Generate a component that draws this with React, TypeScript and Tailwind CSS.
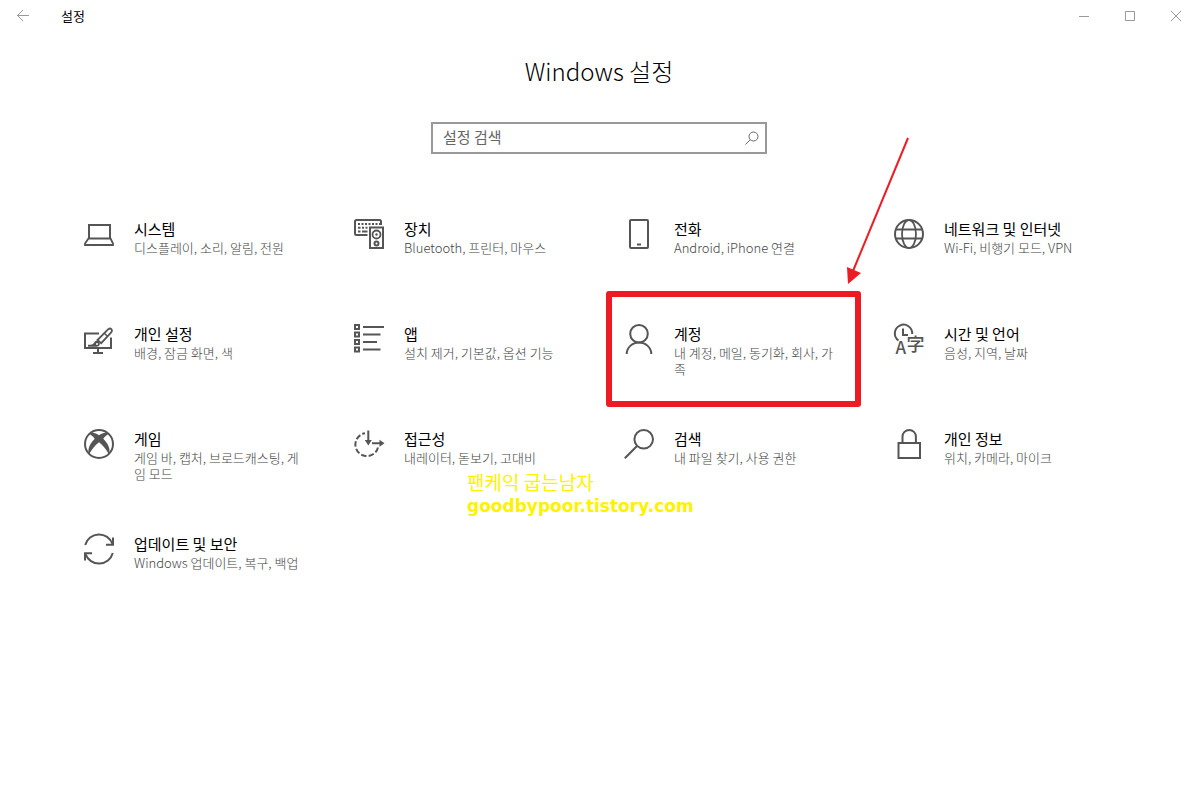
import type { ReactNode } from "react";

type Category = {
  title: string;
  description: string;
  icon: ReactNode;
  overlay?: ReactNode;
};

const Icon = ({ children }: { children: ReactNode }) => (
  <svg
    className="size-[30px] shrink-0 overflow-visible text-[#555]"
    viewBox="0 0 30 30"
    fill="none"
    stroke="currentColor"
    strokeWidth="2"
    aria-hidden="true"
  >
    {children}
  </svg>
);

const SystemIcon = () => (
  <Icon>
    <path d="M5 19V6h21v13" />
    <path d="M4.500 19.500h22l2.500 5V26H1v-1.500z" strokeWidth="1.800" />
  </Icon>
);

const DevicesIcon = () => (
  <Icon>
    <path d="M13.500 16H2.500Q1 16 1 14.500V2.500Q1 1 2.500 1h23Q27 1 27 2.500V6" />
    <path d="M4 5h22" strokeDasharray="2 1.500" />
    <path d="M4 8.800h2.500M8 8.800h2M11.500 8.800h2M4 12.500h2.500M8 12.500h5.500" />
    <path d="M16 8.500h13V29H16z" />
    <circle cx="22.500" cy="15.500" r="4" strokeWidth="1.800" />
    <circle cx="22.500" cy="15.500" r="1.200" fill="currentColor" stroke="none" />
    <circle cx="22.500" cy="24.500" r="2" />
  </Icon>
);

const PhoneIcon = () => (
  <Icon>
    <rect x="6" y="1" width="18" height="28" rx="1" />
    <path d="M13 25.500h4" />
  </Icon>
);

const NetworkIcon = () => (
  <Icon>
    <circle cx="15" cy="15" r="14" />
    <ellipse cx="15" cy="15" rx="7" ry="14" strokeWidth="1.800" />
    <path d="M2 10.500h26M2 19.500h26" />
  </Icon>
);

const PersonalizationIcon = () => (
  <Icon>
    <path d="M15 9.500H1V24h26V13.500" />
    <path d="M14 24v5M9 29h10" />
    <path d="M13.500 16L24.300 5.200Q26 3.900 27.400 5.100 28.600 6.600 27.200 8.300L17.200 19.200z" strokeWidth="1.800" />
    <path d="M20.300 9.300l3.200 2.900" strokeWidth="1.400" />
    <path d="M4 20.800c3.500 0 5-.3 6.200-2.300 1-1.800 3-2.200 4.700-.8 1.500 1.500 1.200 3.600-.5 4.500-1 .6-3 .6-10.400.6z" fill="currentColor" stroke="none" />
    <circle cx="13" cy="20" r="1" fill="white" stroke="none" />
  </Icon>
);

const AppsIcon = () => (
  <Icon>
    <path d="M1 1h4v4H1zM1 8.500h4v4H1zM1 16h4v4H1zM1 23.500h4v4H1z" />
    <path d="M9 3h21M9 10.500h17.500M9 18h14M9 25.500h17.500" />
  </Icon>
);

const AccountIcon = () => (
  <Icon>
    <circle cx="15" cy="9.800" r="8.800" />
    <path d="M2.700 30a12.300 11.500 0 0 1 24.600 0" />
  </Icon>
);

const TimeIcon = () => (
  <Icon>
    <path d="M4.500 16.500A8.700 8.700 0 1 1 18.200 10" />
    <path d="M9 4.500V11h5" />
    <g
      className="font-['Noto_Sans_CJK_KR',sans-serif] font-medium"
      fill="currentColor"
      stroke="none"
    >
      <text x="1.500" y="29.800" fontSize="17">A</text>
      <text x="12.500" y="26.500" fontSize="18">字</text>
    </g>
  </Icon>
);

const GamingIcon = () => (
  <Icon>
    <circle cx="15" cy="15" r="14" />
    <path
      d="M4.500 5C8 2.700 12 4.200 15 6.300 18 4.200 22 2.700 25.500 5 23 5.300 21 7.500 19.300 9.700 23.500 14 27 19.500 25 25.500 22.500 20.500 19 16.500 15 13.200 11 16.500 7.500 20.500 5 25.500 3 19.500 6.500 14 10.700 9.700 9 7.500 7 5.300 4.500 5z"
      fill="currentColor"
      stroke="none"
    />
  </Icon>
);

const AccessIcon = () => (
  <Icon>
    <path d="M24 18.500A11.500 11.500 0 1 1 11 4.200" strokeDasharray="5.500 2.200" />
    <path d="M14.300 1.500V13M18 14.200h9" />
    <path d="M10.800 11h7l-3.500 5.500zM25.500 10.700l5 3.500-5 3.500z" fill="currentColor" stroke="none" />
  </Icon>
);

const SearchIcon = () => (
  <Icon>
    <circle cx="19.700" cy="10.300" r="9.300" />
    <path d="M13 17L.8 29.300" />
  </Icon>
);

const PrivacyIcon = () => (
  <Icon>
    <path d="M4.500 14h21.500v15H4.500z" />
    <path d="M8.500 14V7.500a6.700 6.500 0 0 1 13.400 0V14" />
  </Icon>
);

const UpdateIcon = () => (
  <Icon>
    <path d="M1.200 11A14.300 14.300 0 0 1 28.500 10M28.800 19A14.300 14.300 0 0 1 1.500 20" />
    <path d="M29 3.500v7.200h-7M1 26.500v-7.200h7" />
  </Icon>
);

const Highlight = () => (
  <>
    <div className="pointer-events-none absolute -top-[33px] left-[7px] h-[116px] w-[255px] rounded-[3px] border-6 border-[#ed1c24]" />
    <svg
      className="pointer-events-none absolute -top-[188px] left-[247px] h-[150px] w-16 text-[#ed1c24]"
      viewBox="0 0 64 150"
      aria-hidden="true"
    >
      <path d="M62 2L7 135" fill="none" stroke="currentColor" strokeWidth="2" />
      <path d="M1 131l14 6L2 148z" fill="currentColor" />
    </svg>
  </>
);

const Watermark = () => (
  <p className="pointer-events-none absolute top-[41px] left-[138px] whitespace-nowrap text-[#fff200]">
    <span className="block text-[19px] leading-6">팬케익 굽는남자</span>
    <span className="block font-['DejaVu_Sans',sans-serif] text-[17px] leading-6 font-bold">
      goodbypoor.tistory.com
    </span>
  </p>
);

const categories: Category[] = [
  { title: "시스템", description: "디스플레이, 소리, 알림, 전원", icon: <SystemIcon /> },
  { title: "장치", description: "Bluetooth, 프린터, 마우스", icon: <DevicesIcon /> },
  { title: "전화", description: "Android, iPhone 연결", icon: <PhoneIcon /> },
  { title: "네트워크 및 인터넷", description: "Wi-Fi, 비행기 모드, VPN", icon: <NetworkIcon /> },
  { title: "개인 설정", description: "배경, 잠금 화면, 색", icon: <PersonalizationIcon /> },
  { title: "앱", description: "설치 제거, 기본값, 옵션 기능", icon: <AppsIcon /> },
  { title: "계정", description: "내 계정, 메일, 동기화, 회사, 가족", icon: <AccountIcon />, overlay: <Highlight /> },
  { title: "시간 및 언어", description: "음성, 지역, 날짜", icon: <TimeIcon /> },
  { title: "게임", description: "게임 바, 캡처, 브로드캐스팅, 게임 모드", icon: <GamingIcon /> },
  { title: "접근성", description: "내레이터, 돋보기, 고대비", icon: <AccessIcon />, overlay: <Watermark /> },
  { title: "검색", description: "내 파일 찾기, 사용 권한", icon: <SearchIcon /> },
  { title: "개인 정보", description: "위치, 카메라, 마이크", icon: <PrivacyIcon /> },
  { title: "업데이트 및 보안", description: "Windows 업데이트, 복구, 백업", icon: <UpdateIcon /> },
];

const TitleBar = () => (
  <header className="flex h-8 items-center text-[#999]">
    <button type="button" aria-label="뒤로" className="flex h-8 w-[46px] items-center justify-center">
      <svg className="size-3" viewBox="0 0 12 12" fill="none" stroke="currentColor" aria-hidden="true">
        <path d="M0 5.500h12M6 0L.5 5.500 6 11" />
      </svg>
    </button>
    <span className="ml-[15px] text-[13px] text-black">설정</span>
    <div className="ml-auto flex gap-2">
      <button type="button" aria-label="최소화" className="flex h-8 w-[38px] items-center justify-center">
        <svg className="size-[10px]" viewBox="0 0 10 10" stroke="currentColor" aria-hidden="true">
          <path d="M0 5.500h10" />
        </svg>
      </button>
      <button type="button" aria-label="최대화" className="flex h-8 w-[38px] items-center justify-center">
        <svg className="size-[10px]" viewBox="0 0 10 10" fill="none" stroke="currentColor" aria-hidden="true">
          <path d="M.5.5h9v9h-9z" />
        </svg>
      </button>
      <button type="button" aria-label="닫기" className="flex h-8 w-[38px] items-center justify-center">
        <svg className="size-[10px]" viewBox="0 0 10 10" stroke="currentColor" aria-hidden="true">
          <path d="M0 0l10 10M10 0L0 10" />
        </svg>
      </button>
    </div>
  </header>
);

export default function App() {
  return (
    <div className="min-h-screen bg-white font-['Noto_Sans_CJK_KR',sans-serif] text-black">
      <TitleBar />
      <main className="pt-[23px] pl-[3px]">
        <h1 className="text-center text-[24px] leading-8 font-light">Windows 설정</h1>
        <form
          role="search"
          className="mx-auto mt-[35px] flex h-8 w-[336px] items-center border-2 border-[#999] pr-1.5 pl-2.5"
        >
          <input
            type="text"
            aria-label="설정 검색"
            placeholder="설정 검색"
            className="min-w-0 flex-1 pb-0.5 text-[15px] leading-5 outline-none placeholder:text-[#666]"
          />
          <button type="button" aria-label="검색" className="text-[#666]">
            <svg className="size-[14px]" viewBox="0 0 14 14" fill="none" stroke="currentColor" aria-hidden="true">
              <circle cx="8.500" cy="5.500" r="4.500" />
              <path d="M5.300 8.700L.5 13.500" />
            </svg>
          </button>
        </form>
        <ul className="mt-[65px] grid auto-rows-[105px] grid-cols-[repeat(auto-fill,270px)] justify-center">
          {categories.map(({ title, description, icon, overlay }) => (
            <li key={title} className="relative">
              <a href="#" className="flex gap-5 pr-[26px] pl-[25px]">
                {icon}
                <span className="flex flex-col gap-px">
                  <span className="text-[15px] leading-5">{title}</span>
                  <span className="text-[13px] leading-4 font-light text-[#444]">{description}</span>
                </span>
              </a>
              {overlay}
            </li>
          ))}
        </ul>
      </main>
    </div>
  );
}
